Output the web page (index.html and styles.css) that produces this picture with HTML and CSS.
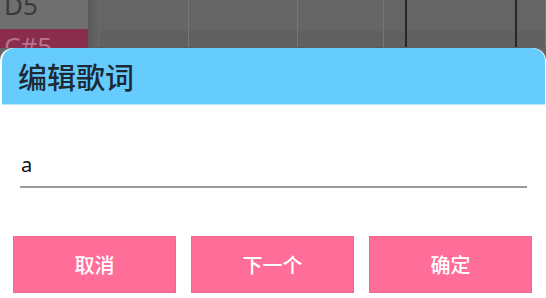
FILE: index.html
```html
<!DOCTYPE html>
<html lang="zh-CN">
<head>
    <meta charset="UTF-8">
    <meta name="viewport" content="width=device-width, initial-scale=1.0">
    <title>编辑歌词</title>
    <link rel="stylesheet" href="styles.css">
</head>
<body>
    <div class="roll">
        <div class="keys">
            <div class="key">D5</div>
            <div class="key sharp">C#5</div>
        </div>
        <div class="grid">
            <div class="shade"></div>
            <div class="col" style="width: 88px"></div>
            <div class="col" style="width: 108px"></div>
            <div class="col" style="width: 85px"></div>
            <div class="col bar" style="width: 21px"></div>
            <div class="col bar" style="width: 108px"></div>
            <div class="col" style="flex: 1"></div>
        </div>
    </div>

    <div class="dialog">
        <div class="dialog-title">编辑歌词</div>
        <input class="lyric-input" type="text" value="a">
        <div class="actions">
            <button class="action-btn">取消</button>
            <button class="action-btn">下一个</button>
            <button class="action-btn">确定</button>
        </div>
    </div>
</body>
</html>
```

FILE: styles.css
```css
body {
    margin: 0;
    width: 546px;
    height: 298px;
    overflow: hidden;
    background-color: #656565;
    font-family: "Noto Sans", "Noto Sans CJK SC", sans-serif;
    display: flex;
    flex-direction: column;
}

/* piano roll behind the dialog */
.roll {
    height: 48px;
    display: flex;
    flex-shrink: 0;
}
.keys {
    width: 88px;
    background-color: #6f6f6f;
    display: flex;
    flex-direction: column;
}
.key {
    height: 29px;
    padding-left: 4px;
    font-size: 26px;
    line-height: 10px;
    color: #3a3a3a;
    overflow: hidden;
}
.key.sharp {
    height: 19px;
    line-height: 34px;
    background-color: #8a2c4c;
    color: #b8728c;
}
.grid {
    flex: 1;
    display: flex;
    border-bottom: 1px solid #5c5c5c;
    background: linear-gradient(#656565 0, #656565 31px, #606060 31px);
}
.shade {
    width: 12px;
    background: linear-gradient(to right, #5a5a5a, #676767);
}
.col {
    border-right: 1px solid #777;
}
.col.bar {
    border-right: 2px solid #262626;
}
.col.bar:last-of-type {
    border-right: 1px solid #777;
}

/* dialog */
.dialog {
    flex: 1;
    background-color: white;
    border-radius: 13px 13px 0 0;
    overflow: hidden;
    display: flex;
    flex-direction: column;
}
.dialog-title {
    height: 57px;
    margin: 0 1px 0 2px;
    padding-left: 16px;
    display: flex;
    align-items: center;
    background-color: #66cbfd;
    border-bottom: 1px solid #b8e6fc;
    border-radius: 13px 13px 0 0;
    color: #1d2a35;
    font-family: "Noto Sans CJK SC", sans-serif;
    font-size: 29px;
    font-weight: 500;
    box-sizing: border-box;
}
.lyric-input {
    margin: 47px 19px 0 20px;
    padding: 0 0 10px 1px;
    height: 24px;
    border: none;
    border-bottom: 2px solid #9a9a9a;
    outline: none;
    font-family: "Noto Sans", sans-serif;
    font-size: 20px;
    color: #111;
    background: transparent;
}
.actions {
    margin-top: 48px;
    padding: 0 12px 0 13px;
    display: flex;
    gap: 15px;
}
.action-btn {
    width: 163px;
    height: 57px;
    border: 1px solid #f0668e;
    background-color: #ff6e98;
    color: white;
    font-family: "Noto Sans CJK SC", sans-serif;
    font-size: 20px;
    font-weight: 500;
    cursor: pointer;
}
.action-btn:hover {
    background-color: #f25d88;
}
```
